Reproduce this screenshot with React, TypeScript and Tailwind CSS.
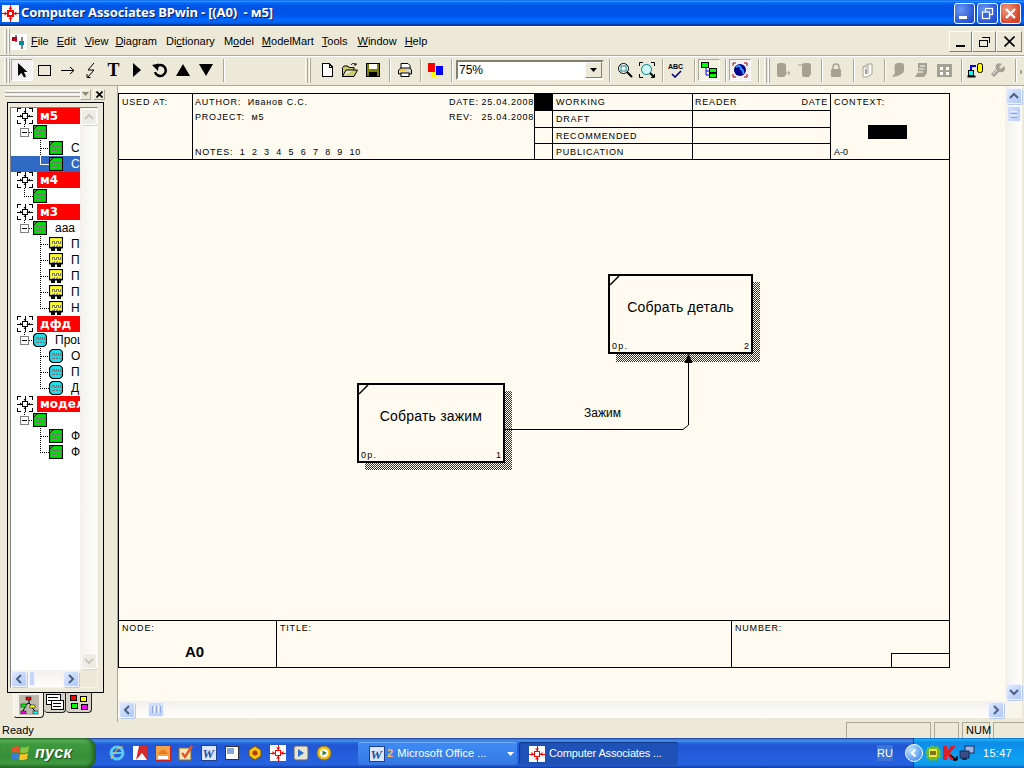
import React from "react";

const S = ({ children, w = 16, h = 16 }: { children: React.ReactNode; w?: number; h?: number }) => (
  <svg width={w} height={h} viewBox={`0 0 ${w} ${h}`} className="block shrink-0">{children}</svg>
);

const BPLogo = ({ size = 16 }: { size?: number }) => (
  <svg width={size} height={size} viewBox="0 0 16 16" className="block shrink-0">
    <rect width="16" height="16" fill="#fff" />
    <g stroke="#f00" strokeWidth="1" shapeRendering="crispEdges" fill="none">
      <rect x="5.5" y="5.5" width="5" height="5" strokeWidth="1.4" />
      <path d="M0 8H5M11 8H16M8 0V5M8 11V16" />
    </g>
    <path d="M8 5L6 2.5H10ZM8 11L6 13.5H10ZM5 8L2.5 6V10ZM11 8L13.5 6V10Z" fill="#f00" />
  </svg>
);

const Grip = ({ className = "" }: { className?: string }) => (
  <div className={`flex h-[25px] w-[6px] gap-[1px] shrink-0 ${className}`}>
    <div className="w-[3px] h-full border-l border-white bg-[#ECE9D8] border-r border-r-[#ACA899]" />
    <div className="w-[2px] h-full border-r border-r-[#ACA899] border-l border-white" />
  </div>
);

const Sep = ({ className = "" }: { className?: string }) => (
  <div className={`w-[2px] h-[23px] shrink-0 border-l border-l-[#ACA899] border-r border-r-white ${className}`} />
);

const Tool = ({ children, className = "w-[23px]" }: { children: React.ReactNode; className?: string }) => (
  <div className={`h-[22px] flex items-center justify-center shrink-0 ${className}`}>{children}</div>
);

const Pressed = ({ children, className = "" }: { children: React.ReactNode; className?: string }) => (
  <div className={`w-[22px] h-[22px] flex items-center justify-center shrink-0 border border-[#ACA899] border-r-white border-b-white bg-[image:repeating-conic-gradient(#ECE9D8_0%_25%,#ffffff_0%_50%)] bg-[length:2px_2px] ${className}`}>{children}</div>
);

const GRAY = "#A5A294";

const Chev = ({ dir, color = "#4D6185" }: { dir: "u" | "d" | "l" | "r"; color?: string }) => {
  const d = { u: "M3 9L7 5L11 9", d: "M3 5L7 9L11 5", l: "M9 3L5 7L9 11", r: "M5 3L9 7L5 11" }[dir];
  return (
    <svg width="14" height="14" viewBox="0 0 14 14" className="block">
      <path d={d} fill="none" stroke={color} strokeWidth="2" />
    </svg>
  );
};

const SBtn = ({ dir, className = "" }: { dir: "u" | "d" | "l" | "r"; className?: string }) => (
  <div className={`w-[16px] h-[16px] shrink-0 flex items-center justify-center rounded-[2px] border border-[#EEF3FE] bg-[linear-gradient(135deg,#E1EAFE,#AEC8F7)] shadow-[1px_1px_0_#B9C9EC] ${className}`}>
    <Chev dir={dir} />
  </div>
);

const SBtnOff = ({ dir, className = "" }: { dir: "u" | "d"; className?: string }) => (
  <div className={`w-[16px] h-[16px] shrink-0 flex items-center justify-center rounded-[2px] border border-white bg-[#EEEDE5] shadow-[1px_1px_0_#D8D6CA] ${className}`}>
    <Chev dir={dir} color="#C9C7BA" />
  </div>
);

const ModelIcon = () => (
  <S>
    <g fill="none" stroke="#000" shapeRendering="crispEdges">
      <path d="M0.5 4V0.5H4M12 0.5H15.5V4M15.5 12V15.5H12M4 15.5H0.5V12" />
      <path d="M8 0V5M8 11V16M0 8H5M11 8H16" />
      <rect x="5.5" y="5.5" width="5" height="5" strokeWidth="1" fill="#fff" />
    </g>
    <path d="M8 5L6.5 3H9.5ZM8 11L6.5 13H9.5ZM5 8L3 6.5V9.5ZM11 8L13 6.5V9.5Z" />
  </S>
);

const Box = ({ color, kind = "idef" }: { color: string; kind?: "idef" | "dfd" | "flow" }) => (
  <S w={14} h={14}>
    <rect x="0.5" y="0.5" width="13" height={kind === "flow" ? 10 : 13} rx={kind === "dfd" ? 4 : 0} fill={color} stroke="#000" strokeWidth="1.2" />
    {kind === "flow" && <path d="M2 11H6V14H2ZM8 11H12V14H8Z" />}
    {kind === "flow" && <rect x="0.5" y="10.5" width="13" height="1" />}
    {kind === "idef" && <path d="M1 4L4 1" stroke="#000" strokeWidth="1" />}
    <path d="M3.5 6.5V4H5.5V6.5H7V4H9V6.5H11V4M3 9H5V7.5M6.5 9H8.5V7.5M10 9H11.5" fill="none" stroke="#777" strokeWidth="1" shapeRendering="crispEdges" />
  </S>
);

const Lbl = ({ children, white }: { children: React.ReactNode; white?: boolean }) => (
  <span className={`ml-[8px] text-[12px] whitespace-nowrap leading-none ${white ? "text-white" : "text-black"}`}>{children}</span>
);

const ModelRow = ({ name }: { name: string }) => (
  <div className="h-[16px] flex items-center bg-white">
    <div className="ml-[6px]"><ModelIcon /></div>
    <div className="ml-[4px] h-[16px] w-[43px] shrink-0 bg-[#FF0000] pl-[3px] flex items-center text-[12px] font-bold text-white font-['DejaVu_Sans',sans-serif] whitespace-nowrap overflow-hidden">{name}</div>
  </div>
);

const L2 = ({ color, kind, text, minus = true }: { color: string; kind: "idef" | "dfd" | "flow"; text?: string; minus?: boolean }) => (
  <div className="h-[16px] flex items-center bg-white">
    <svg width="22" height="16" viewBox="0 0 22 16" className="block shrink-0">
      <g fill="none" stroke="#000" strokeDasharray="1 1" shapeRendering="crispEdges">
        <path d={minus ? "M13.5 0V4" : "M13.5 0V8.5H22"} />
        {minus && <path d="M18 8.5H22" />}
      </g>
      {minus && (
        <g shapeRendering="crispEdges">
          <rect x="9.5" y="4.5" width="8" height="8" fill="#fff" stroke="#808080" />
          <path d="M11 8.5H16" stroke="#000" />
        </g>
      )}
    </svg>
    <Box color={color} kind={kind} />
    {text && <Lbl>{text}</Lbl>}
  </div>
);

const L3 = ({ color, kind, text, last, sel }: { color: string; kind: "idef" | "dfd" | "flow"; text: string; last?: boolean; sel?: boolean }) => (
  <div className={`h-[16px] flex items-center ${sel ? "bg-[#316AC5]" : "bg-white"}`}>
    <svg width="38" height="16" viewBox="0 0 38 16" className="block shrink-0">
      <path d={last ? "M29.5 0V8.5H38" : "M29.5 0V16M29.5 8.5H38"} fill="none" stroke={sel ? "#fff" : "#000"} strokeDasharray={sel ? undefined : "1 1"} shapeRendering="crispEdges" />
    </svg>
    <Box color={color} kind={kind} />
    <Lbl white={sel}>{text}</Lbl>
  </div>
);

const Tree = () => (
  <div className="w-[69px] shrink-0 bg-white overflow-hidden flex flex-col">
    <ModelRow name="м5" />
    <L2 color="#00E000" kind="idef" />
    <L3 color="#00E000" kind="idef" text="Со" />
    <L3 color="#00E000" kind="idef" text="Со" last sel />
    <ModelRow name="м4" />
    <L2 color="#00E000" kind="idef" minus={false} />
    <ModelRow name="м3" />
    <L2 color="#00E000" kind="idef" text="ааа" />
    <L3 color="#FFFF33" kind="flow" text="П" />
    <L3 color="#FFFF33" kind="flow" text="П" />
    <L3 color="#FFFF33" kind="flow" text="П" />
    <L3 color="#FFFF33" kind="flow" text="П" />
    <L3 color="#FFFF33" kind="flow" text="Н" last />
    <ModelRow name="дфд" />
    <L2 color="#22DDEE" kind="dfd" text="Проц" />
    <L3 color="#22DDEE" kind="dfd" text="О" />
    <L3 color="#22DDEE" kind="dfd" text="П" />
    <L3 color="#22DDEE" kind="dfd" text="Д" last />
    <ModelRow name="модель" />
    <L2 color="#00E000" kind="idef" />
    <L3 color="#00E000" kind="idef" text="Ф" />
    <L3 color="#00E000" kind="idef" text="Ф" last />
  </div>
);

const LeftPanel = () => (
  <div className="w-[118px] shrink-0 h-full flex flex-col border-r border-r-[#ACA899] bg-[#ECE9D8]">
    <div className="h-[16px] flex shrink-0 items-center pl-[5px]">
      <div className="w-[75px] h-[7px] flex flex-col gap-[1px] mt-[-1px]">
        <div className="h-[3px] border-t border-white border-b border-b-[#ACA899]" />
        <div className="h-[3px] border-t border-white border-b border-b-[#ACA899]" />
      </div>
      <div className="w-[11px] h-[11px] border border-white border-r-[#ACA899] border-b-[#ACA899] flex items-center justify-center">
        <svg width="7" height="4" viewBox="0 0 7 4"><path d="M0 0H7L3.5 4Z" fill="#8A8878" /></svg>
      </div>
      <div className="ml-[2px] w-[12px] h-[11px] border border-white border-r-[#ACA899] border-b-[#ACA899] flex items-center justify-center">
        <svg width="7" height="7" viewBox="0 0 7 7"><path d="M0.5 0.5L6.5 6.5M6.5 0.5L0.5 6.5" stroke="#000" strokeWidth="1.6" /></svg>
      </div>
    </div>
    <div className="ml-[7px] w-[97px] h-[591px] shrink-0 border border-black pl-[2px] pr-[4px] pt-[4px] pb-[4px] flex">
      <div className="w-[88px] h-[581px] border border-[#808080] border-r-[#F5F3EA] border-b-[#F5F3EA] flex flex-col bg-white">
        <div className="flex h-[562px] overflow-hidden">
          <Tree />
          <div className="w-[17px] shrink-0 flex flex-col justify-between py-[1px] pl-[1px] bg-[linear-gradient(90deg,#F3F1EC,#FEFEFB)]">
            <SBtnOff dir="u" />
            <SBtnOff dir="d" />
          </div>
        </div>
        <div className="h-[17px] flex shrink-0">
          <div className="w-[69px] flex items-center bg-[linear-gradient(180deg,#F3F1EC,#FEFEFB)]">
            <SBtn dir="l" />
            <div className="ml-[2px] w-[6px] h-[15px] rounded-[2px] bg-[#C6D6F8] border border-[#EEF3FE]" />
            <SBtn dir="r" className="ml-auto mr-[1px]" />
          </div>
          <div className="flex-1 bg-[#ECE9D8]" />
        </div>
      </div>
    </div>
    <div className="flex pl-[13px] items-start">
      <div className="w-[31px] h-[25px] bg-[#F4F2E8] rounded-b-[4px] border-r border-b border-r-[#222] border-b-[#222] border-l border-l-white flex items-center justify-center">
        <div className="w-[20px] h-[20px] bg-[#BDBAAD] flex items-center justify-center">
          <svg width="18" height="18" viewBox="0 0 18 18">
            <path d="M9 4V7M9 7L5 9M9 7L12 10M12 12L15 15M5 11L3 15" stroke="#000" fill="none" />
            <rect x="6" y="1" width="5" height="3" fill="#f00" stroke="#000" strokeWidth=".5" />
            <rect x="1" y="8" width="5" height="3" fill="#0f0" stroke="#000" strokeWidth=".5" />
            <rect x="10" y="9" width="5" height="3" fill="#ff0" stroke="#000" strokeWidth=".5" />
            <rect x="1" y="15" width="5" height="3" fill="#f0f" stroke="#000" strokeWidth=".5" />
            <rect x="13" y="15" width="5" height="3" fill="#0ff" stroke="#000" strokeWidth=".5" />
          </svg>
        </div>
      </div>
      <div className="w-[22px] h-[20px] border-r border-b border-r-[#222] border-b-[#222] rounded-b-[4px] flex items-center justify-center bg-[#D5D2C5]">
        <svg width="18" height="17" viewBox="0 0 18 17" shapeRendering="crispEdges">
          <rect x="0.5" y="0.5" width="14" height="10" fill="#fff" stroke="#000" />
          <path d="M2 3H12M2 6H8" stroke="#000" />
          <rect x="5.5" y="6.5" width="12" height="9" fill="#fff" stroke="#000" />
          <path d="M7 9H15M7 12H15" stroke="#000" />
        </svg>
      </div>
      <div className="w-[26px] h-[20px] border-r border-b border-r-[#222] border-b-[#222] rounded-b-[4px] flex items-center justify-center bg-[#D5D2C5]">
        <svg width="20" height="17" viewBox="0 0 20 17" shapeRendering="crispEdges">
          <rect x="1.5" y="1.5" width="6" height="5" fill="#f00" stroke="#000" />
          <rect x="11.5" y="2.5" width="6" height="5" fill="#ff0" stroke="#000" />
          <rect x="2.5" y="9.5" width="6" height="5" fill="#0f0" stroke="#000" />
          <rect x="12.5" y="10.5" width="6" height="5" fill="#f0f" stroke="#000" />
        </svg>
      </div>
    </div>
  </div>
);

const Dither = ({ className }: { className: string }) => (
  <div className={`absolute bg-[image:repeating-conic-gradient(#333_0%_25%,#FFFBF0_0%_50%)] bg-[length:2px_2px] ${className}`} />
);

const Activity = ({ text, num, className }: { text: string; num: string; className: string }) => (
  <div className={`absolute border-2 border-black bg-[#FFFBF0] flex items-center justify-center pb-[13px] ${className}`}>
    <svg width="10" height="10" viewBox="0 0 10 10" className="absolute left-0 top-0"><path d="M0 9L9 0" stroke="#000" strokeWidth="1.5" /></svg>
    <span className="text-[14px] tracking-[0.2px] whitespace-nowrap">{text}</span>
    <span className="absolute left-[2px] bottom-[1px] text-[9px] tracking-[1.2px] leading-[10px]">0р.</span>
    <span className="absolute right-[2px] bottom-[1px] text-[9px] leading-[10px]">{num}</span>
  </div>
);

const Small = ({ children, className = "" }: { children: React.ReactNode; className?: string }) => (
  <span className={`block text-[9px] tracking-[0.8px] leading-[12px] whitespace-nowrap ${className}`}>{children}</span>
);

const StatusCell = ({ children, className = "" }: { children?: React.ReactNode; className?: string }) => (
  <div className={`flex items-center pl-[3px] ${className}`}>{children}</div>
);

const Frame = () => (
  <div className="ml-0 mt-[7px] w-[832px] h-[575px] border border-black flex flex-col text-black">
    <div className="h-[66px] shrink-0 border-b border-black grid grid-cols-[74px_342px_296px_118px]">
      <div className="border-r border-black pl-[3px] pt-[2px]"><Small>USED AT:</Small></div>
      <div className="border-r border-black pl-[2px] pt-[2px] flex flex-col">
        <div className="flex justify-between h-[15px]">
          <Small>AUTHOR:&nbsp; Иванов С.С.</Small>
          <div className="w-[85px] flex justify-between"><Small>DATE:</Small><Small className="tracking-[0.75px]">25.04.2008</Small></div>
        </div>
        <div className="flex justify-between h-[15px]">
          <Small>PROJECT:&nbsp; м5</Small>
          <div className="w-[85px] flex justify-between"><Small>REV:</Small><Small className="tracking-[0.75px]">25.04.2008</Small></div>
        </div>
        <Small className="mt-auto mb-[1px] [word-spacing:3.1px]">NOTES: 1 2 3 4 5 6 7 8 9 10</Small>
      </div>
      <div className="grid grid-cols-[18px_140px_138px] grid-rows-[17px_17px_16px_15px]">
        <div className="bg-black border-r border-b border-black" />
        <div className="border-r border-b border-black pl-[3px] flex items-center"><Small>WORKING</Small></div>
        <div className="border-r border-b border-black px-[2px] flex items-center justify-between"><Small>READER</Small><Small>DATE</Small></div>
        <div className="border-r border-b border-black" />
        <div className="border-r border-b border-black pl-[3px] flex items-center"><Small>DRAFT</Small></div>
        <div className="border-r border-b border-black" />
        <div className="border-r border-b border-black" />
        <div className="border-r border-b border-black pl-[3px] flex items-center"><Small>RECOMMENDED</Small></div>
        <div className="border-r border-b border-black" />
        <div className="border-r border-black" />
        <div className="border-r border-black pl-[3px] flex items-center"><Small>PUBLICATION</Small></div>
        <div className="border-r border-black" />
      </div>
      <div className="pl-[3px] pt-[2px] flex flex-col relative">
        <Small>CONTEXT:</Small>
        <div className="mt-[17px] ml-[34px] w-[39px] h-[14px] bg-black" />
        <Small className="mt-auto mb-[1px] tracking-normal">A-0</Small>
      </div>
    </div>
    <div className="flex-1 relative">
      <Dither className="left-[246px] top-[231px] w-[147px] h-[79px]" />
      <Activity text="Собрать зажим" num="1" className="left-[238px] top-[223px] w-[148px] h-[80px]" />
      <Dither className="left-[497px] top-[122px] w-[144px] h-[80px]" />
      <Activity text="Собрать деталь" num="2" className="left-[489px] top-[114px] w-[145px] h-[80px]" />
      <svg width="830" height="460" viewBox="0 0 830 460" className="absolute left-0 top-0 pointer-events-none">
        <path d="M386 269.5H564L569.5 265V200" fill="none" stroke="#000" strokeWidth="1" />
        <path d="M569.5 193.5L565.5 203H573.5Z" fill="#000" />
      </svg>
      <span className="absolute left-[465px] top-[246px] text-[12px] leading-[14px]">Зажим</span>
    </div>
    <div className="h-[47px] shrink-0 border-t border-black grid grid-cols-[158px_455px_217px]">
      <div className="border-r border-black pl-[3px] pt-[1px] flex flex-col">
        <Small>NODE:</Small>
        <div className="text-[15px] font-bold leading-[18px] mt-[9px] text-center pr-[9px] font-['Liberation_Sans',sans-serif]">A0</div>
      </div>
      <div className="border-r border-black pl-[3px] pt-[1px]"><Small>TITLE:</Small></div>
      <div className="pl-[3px] pt-[1px] flex flex-col">
        <Small>NUMBER:</Small>
        <div className="mt-auto self-end w-[58px] h-[14px] border-l border-t border-black" />
      </div>
    </div>
  </div>
);

const Main = () => (
  <div className="flex-1 h-full flex flex-col bg-[#ECE9D8]">
    <div className="flex h-[615px] shrink-0">
      <div className="w-[887px] shrink-0 bg-[#FFFBF0] flex flex-col overflow-hidden"><Frame /></div>
      <div className="w-[17px] shrink-0 bg-[linear-gradient(90deg,#F3F1EC,#FEFEFB)] flex flex-col pl-[1px]">
        <SBtn dir="u" className="mt-[2px]" />
        <div className="mt-[2px] ml-[1px] w-[14px] h-[16px] rounded-[2px] border border-[#EEF3FE] bg-[linear-gradient(90deg,#D3DFFB,#BDD0F8)] flex flex-col justify-center gap-[1px] px-[3px]">
          <div className="h-px bg-[#EEF3FE]" /><div className="h-px bg-[#8CA8DE]" /><div className="h-px bg-[#EEF3FE]" /><div className="h-px bg-[#8CA8DE]" />
        </div>
        <SBtn dir="d" className="mt-auto mb-[1px]" />
      </div>
    </div>
    <div className="flex h-[17px] shrink-0">
      <div className="w-[887px] shrink-0 bg-[linear-gradient(180deg,#F3F1EC,#FEFEFB)] flex items-center pl-[1px]">
        <SBtn dir="l" />
        <div className="ml-[13px] w-[16px] h-[15px] rounded-[2px] border border-[#EEF3FE] bg-[linear-gradient(180deg,#D3DFFB,#BDD0F8)] flex justify-center items-center gap-[1px]">
          <div className="w-px h-[7px] bg-[#8CA8DE]" /><div className="w-px h-[7px] bg-[#EEF3FE]" /><div className="w-px h-[7px] bg-[#8CA8DE]" /><div className="w-px h-[7px] bg-[#EEF3FE]" /><div className="w-px h-[7px] bg-[#8CA8DE]" />
        </div>
        <SBtn dir="r" className="ml-auto mr-[1px]" />
      </div>
      <div className="w-[17px] shrink-0 bg-[#F7F5EC]" />
    </div>
  </div>
);

const WinBtn = ({ children, red }: { children: React.ReactNode; red?: boolean }) => (
  <div className={`w-[21px] h-[21px] rounded-[3px] border border-white flex items-center justify-center ${red ? "bg-[radial-gradient(circle_at_30%_30%,#EE9A80,#D5472A_70%)]" : "bg-[radial-gradient(circle_at_30%_30%,#6C98F0,#2452D4_75%)]"}`}>{children}</div>
);

const TitleBar = () => (
  <div className="h-[26px] shrink-0 flex items-center bg-[linear-gradient(180deg,#0058EE_0%,#3593FF_4%,#288EFF_6%,#127DFF_8%,#036FFC_10%,#0262EE_14%,#0057E5_20%,#0054E3_24%,#0055EB_56%,#005BF5_66%,#026AFE_76%,#0062EF_86%,#0052D6_92%,#0040AB_94%,#003092_100%)]">
    <div className="ml-[2px]"><BPLogo size={17} /></div>
    <span className="ml-[2px] text-white text-[13px] tracking-[-0.15px] font-bold whitespace-pre font-['Noto_Sans',sans-serif] [text-shadow:1px_1px_0_#0A1F6A]">Computer Associates BPwin - [(A0)  - м5]</span>
    <div className="ml-auto flex gap-[2px] mr-[3px]">
      <WinBtn><div className="w-[8px] h-[3px] bg-white mt-[8px] mr-[3px]" /></WinBtn>
      <WinBtn>
        <svg width="13" height="13" viewBox="0 0 13 13" fill="none" stroke="#fff" strokeWidth="1.2"><rect x="4.5" y="1.5" width="7" height="6" /><rect x="1.5" y="5" width="7" height="6.5" fill="#3A67D8" /></svg>
      </WinBtn>
      <WinBtn red>
        <svg width="13" height="13" viewBox="0 0 13 13"><path d="M2 2L11 11M11 2L2 11" stroke="#fff" strokeWidth="2.2" /></svg>
      </WinBtn>
    </div>
  </div>
);

const MItem = ({ pre = "", u, post = "", ml }: { pre?: string; u: string; post?: string; ml: string }) => (
  <span className={`text-[11px] text-black whitespace-nowrap ${ml}`}>{pre}<u>{u}</u>{post}</span>
);

const MdiBtn = ({ children, className = "" }: { children: React.ReactNode; className?: string }) => (
  <div className={`h-[21px] flex items-center justify-center border border-white border-r-[#808070] border-b-[#808070] ${className}`}>{children}</div>
);

const MenuBar = () => (
  <div className="h-[30px] shrink-0 flex items-center pt-[1px] border-t border-t-white border-b border-b-[#ACA899] bg-[#ECE9D8]">
    <Grip className="ml-[4px]" />
    <div className="ml-[1px] w-[16px] h-[16px] bg-white">
      <svg width="16" height="16" viewBox="0 0 16 16">
        <path d="M5 1V8M11 3V15" stroke="#000" />
        <rect x="1" y="3" width="5" height="4" fill="#B00020" />
        <rect x="8" y="7" width="5" height="4" fill="#008B9A" />
      </svg>
    </div>
    <MItem u="F" post="ile" ml="ml-[4px]" />
    <MItem u="E" post="dit" ml="ml-[8px]" />
    <MItem u="V" post="iew" ml="ml-[9px]" />
    <MItem u="D" post="iagram" ml="ml-[7px]" />
    <MItem pre="Di" u="c" post="tionary" ml="ml-[9px]" />
    <MItem pre="M" u="o" post="del" ml="ml-[9px]" />
    <MItem u="M" post="odelMart" ml="ml-[8px]" />
    <MItem u="T" post="ools" ml="ml-[8px]" />
    <MItem u="W" post="indow" ml="ml-[10px]" />
    <MItem u="H" post="elp" ml="ml-[8px]" />
    <div className="ml-auto mr-[2px] flex">
      <MdiBtn className="w-[23px]"><div className="w-[9px] h-[2px] bg-black mt-[9px]" /></MdiBtn>
      <MdiBtn className="w-[24px]">
        <svg width="13" height="11" viewBox="0 0 13 11" fill="none" stroke="#000" shapeRendering="crispEdges"><path d="M3.5 1.5H11.5V6.5" strokeWidth="1" /><rect x="3.5" y="1" width="8" height="1" fill="#000" stroke="none" /><rect x="1.5" y="4.5" width="8" height="5.5" fill="#ECE9D8" /><rect x="1.5" y="4" width="8" height="1" fill="#000" stroke="none" /></svg>
      </MdiBtn>
      <MdiBtn className="w-[26px]">
        <svg width="11" height="11" viewBox="0 0 11 11"><path d="M0.5 0.5L10.5 10.5M10.5 0.5L0.5 10.5" stroke="#000" strokeWidth="1.6" /></svg>
      </MdiBtn>
    </div>
  </div>
);

const ToolBar = () => (
  <div className="h-[30px] shrink-0 flex items-center pb-[2px] border-t border-t-white border-b border-b-[#ACA899] bg-[#ECE9D8]">
    <Grip className="ml-[4px]" />
    <Pressed className="ml-[1px]">
      <S><path d="M4 1V14L7.5 11L10 15.5L12 14.5L10 10H13.5Z" /></S>
    </Pressed>
    <Tool><S><rect x="1.5" y="3.5" width="12" height="10" fill="none" stroke="#000" shapeRendering="crispEdges" /></S></Tool>
    <Tool><S><path d="M1 8.5H14M10 5L14 8.5L10 12" fill="none" stroke="#000" /></S></Tool>
    <Tool><S><path d="M11 1L5 8H11L5 15M4 12V15.5H7.5" fill="none" stroke="#000" /></S></Tool>
    <Tool><span className="font-['Liberation_Serif',serif] font-bold text-[18px] leading-none">T</span></Tool>
    <Tool><S><path d="M4 1L12 8L4 15Z" /></S></Tool>
    <Tool><S><path d="M4 5A5.5 5.5 0 1 1 3 10" fill="none" stroke="#000" strokeWidth="2.5" /><path d="M0 3L7 1.5L6 9Z" /></S></Tool>
    <Tool><S><path d="M8 2L15 14H1Z" /></S></Tool>
    <Tool><S><path d="M1 2H15L8 14Z" /></S></Tool>
    <Sep className="ml-[6px]" />

    <Grip className="ml-[80px]" />
    <Tool className="w-[23px] ml-[4px]"><S><path d="M3.5 1.5H10L13.5 5V14.5H3.5Z M10 1.5V5H13.5" fill="#fff" stroke="#000" shapeRendering="crispEdges" /></S></Tool>
    <Tool><S><path d="M0.5 14.5V5.5L2 4H6L7 5.5H12V8H4L0.5 14.5H12L15.5 8H12" fill="#CCCC66" stroke="#000" /><path d="M9 3C10 1 13 1 14 3M14 3V1M14 3H12" fill="none" stroke="#000" /></S></Tool>
    <Tool><S><rect x="1.5" y="1.5" width="13" height="13" fill="#808000" stroke="#000" shapeRendering="crispEdges" /><rect x="4" y="2" width="8" height="5" fill="#fff" /><rect x="4" y="10" width="8" height="4" fill="#000" /></S></Tool>
    <Sep className="ml-[5px]" />
    <Tool className="w-[23px] ml-[2px]"><S><path d="M4 6V1.5H11L13 3.5V6" fill="#fff" stroke="#000" /><path d="M1.5 8L4 6H13L14.5 8V12H1.5Z" fill="#D8D8C8" stroke="#000" /><rect x="4" y="11" width="8" height="3.5" fill="#fff" stroke="#000" /><path d="M3 8H9" stroke="#FFCC00" strokeWidth="1.5" /></S></Tool>
    <Sep className="ml-[4px]" />
    <Tool className="w-[23px] ml-[1px]">
      <S>
        <rect x="4" y="8" width="7" height="7" fill="#FFFF00" />
        <rect x="9" y="4" width="7" height="9" fill="#0000FF" />
        <rect x="1" y="1" width="7" height="9" fill="#FF0000" />
      </S>
    </Tool>
    <Sep className="ml-[5px]" />
    <div className="ml-[3px] w-[148px] h-[20px] shrink-0 border-2 border-[#808070] border-r-[#ECE9D8] border-b-white bg-white flex items-center text-[12px]">
      <span className="ml-[1px]">75%</span>
      <div className="ml-auto w-[17px] h-[16px] bg-[#ECE9D8] border border-white border-r-[#808070] border-b-[#808070] flex items-center justify-center">
        <svg width="7" height="4" viewBox="0 0 7 4"><path d="M0 0H7L3.5 4Z" /></svg>
      </div>
    </div>
    <Sep className="ml-[5px]" />
    <Tool className="w-[22px] ml-[3px]"><S><circle cx="6.5" cy="6.5" r="5" fill="#fff" stroke="#000" /><rect x="4" y="4" width="5" height="5" fill="none" stroke="#008080" /><path d="M10 10L15 15" stroke="#000" strokeWidth="2" /></S></Tool>
    <Tool className="w-[21px]"><S><path d="M0.5 4V0.5H4M12 0.5H15.5V4M0.5 12V15.5H4M12 15.5H15.5V12" fill="none" stroke="#000" /><circle cx="7.5" cy="7.5" r="5" fill="#CFF7F7" stroke="#008080" /><path d="M11 11L15 15" stroke="#000" strokeWidth="2" /></S></Tool>
    <Sep className="ml-[5px]" />
    <Tool className="w-[22px] ml-[1px]">
      <svg width="18" height="16" viewBox="0 0 18 16"><text x="1" y="7" fontSize="7" fontWeight="700" fontFamily="Liberation Sans, sans-serif" fill="#000">ABC</text><path d="M5 12L8 15L14 9" fill="none" stroke="#000080" strokeWidth="1.6" /></svg>
    </Tool>
    <Sep className="ml-[7px]" />
    <Pressed className="ml-[2px]">
      <S>
        <path d="M5 6V13H9M5 9H9" fill="none" stroke="#0000FF" />
        <rect x="0.5" y="0.5" width="7" height="5" fill="#0f0" stroke="#000" />
        <rect x="8.5" y="6.5" width="7" height="4" fill="#0f0" stroke="#000" />
        <rect x="8.5" y="11.5" width="7" height="4" fill="#0f0" stroke="#000" />
      </S>
    </Pressed>
    <Sep className="ml-[5px]" />
    <Pressed className="ml-[2px]">
      <S>
        <path d="M1 4V1H4M12 1H15V4M1 12V15H4M12 15H15V12" fill="none" stroke="#A00000" />
        <circle cx="8" cy="8" r="6" fill="#00008B" />
        <path d="M4 5C7 3 9 4 9 7C11 8 12 10 11 12" fill="none" stroke="#3399FF" strokeWidth="2" />
      </S>
    </Pressed>
    <Sep className="ml-[7px]" />
    <Grip className="ml-[4px]" />
    <Tool className="w-[22px] ml-[2px]"><S><path d="M2 3Q2 1 5 1H8Q11 1 11 4V13L9 15H4Q2 15 2 12Z" fill={GRAY} /><path d="M11 11H15M13 9L15 11L13 13" stroke={GRAY} fill="none" /></S></Tool>
    <Tool className="w-[22px]"><S><path d="M5 3Q5 1 8 1H11Q14 1 14 4V12L12 15H7Q5 15 5 12Z" fill={GRAY} /><path d="M1 3H5" stroke={GRAY} /></S></Tool>
    <Sep className="ml-[5px]" />
    <Tool className="w-[22px] ml-[2px]"><S><path d="M5 7V5A3 3 0 0 1 11 5V7" fill="none" stroke={GRAY} strokeWidth="1.5" /><rect x="3" y="7" width="10" height="8" rx="1" fill={GRAY} /></S></Tool>
    <Sep className="ml-[6px]" />
    <Tool className="w-[22px] ml-[2px]"><S><path d="M3 5L8 2H12V12L7 15H3Z" fill="#fff" stroke={GRAY} /><path d="M8 2V12M3 5H8" stroke={GRAY} /><rect x="5" y="7" width="2" height="5" fill={GRAY} /></S></Tool>
    <Sep className="ml-[5px]" />
    <Tool className="w-[22px] ml-[1px]"><S><path d="M5 2Q6 1 9 1H11Q14 1 14 4V8Q14 11 11 12L8 14L2 15L5 11Q4 7 5 2Z" fill={GRAY} /></S></Tool>
    <Tool className="w-[22px] ml-[1px]"><S><path d="M5 1H14V11L11 15H2L5 10Z" fill={GRAY} /><path d="M7 4H12M6 7H11M5 10H10" stroke="#fff" /></S></Tool>
    <Tool className="w-[22px] ml-[1px]"><S><rect x="1" y="2" width="15" height="13" fill={GRAY} /><path d="M4 5H7V8H4ZM10 5H13V8H10ZM4 10H7V13H4ZM10 10H13V13H10Z" fill="#fff" /></S></Tool>
    <Sep className="ml-[6px]" />
    <Tool className="w-[22px] ml-[1px]"><S><rect x="1.5" y="8.5" width="5" height="5" fill="#0ff" stroke="#000" /><rect x="0.5" y="13.5" width="8" height="2" fill="#000" /><path d="M4 8V4H9" fill="none" stroke="#0000FF" strokeWidth="2" /><rect x="10.5" y="1.5" width="5" height="9" rx="2" fill="#ff0" stroke="#000" /></S></Tool>
    <Tool className="w-[22px] ml-[1px]"><S><path d="M14 4L11 7L9 5L12 2Q8 0 6 3Q5 5 6 7L1 12L4 15L9 10Q12 11 14 9Q16 7 14 4Z" fill={GRAY} /><path d="M3 12L7 8" stroke="#fff" /></S></Tool>
    <Sep className="ml-[6px]" />
    <div className="ml-[3px] mt-[4px] w-[2px] h-[4px] bg-[#A5A294]" />
  </div>
);

const StatusBar = () => (
  <div className="h-[16px] shrink-0 flex items-stretch bg-[#ECE9D8] text-[11px] text-black">
    <span className="pl-[2px] leading-[16px]">Ready</span>
    <div className="ml-auto flex gap-[3px]">
      <StatusCell className="w-[85px] border-t border-l border-r border-[#ACA899]" />
      <StatusCell className="w-[25px] border-t border-l border-r border-[#ACA899]" />
      <StatusCell className="w-[28px] border-t border-l border-r border-[#ACA899]">NUM</StatusCell>
      <StatusCell className="w-[31px] border-t border-l border-[#ACA899]" />
    </div>
  </div>
);

const QL = ({ children }: { children: React.ReactNode }) => (
  <div className="w-[23px] h-full flex items-center justify-center shrink-0">{children}</div>
);

const WordIcon = () => (
  <S>
    <rect x="0.5" y="0.5" width="15" height="15" fill="#DCE6FA" stroke="#223F8C" />
    <text x="1.5" y="13" fontSize="13" fontStyle="italic" fontWeight="700" fontFamily="Liberation Serif, serif" fill="#2A4C9E">W</text>
  </S>
);

const Taskbar = () => (
  <div className="h-[30px] shrink-0 flex bg-[linear-gradient(180deg,#1F2F86_0%,#3165C4_3%,#3682E5_6%,#4490E6_10%,#3883E5_12%,#2B71E0_15%,#2663DA_18%,#235BD6_20%,#2258D5_23%,#2157D6_38%,#245DDB_54%,#2562DF_86%,#245FDC_89%,#2158D4_92%,#1D4EC0_95%,#1941A5_98%)]">
    <div className="w-[96px] h-full shrink-0 rounded-r-[10px] flex items-center pl-[11px] bg-[linear-gradient(180deg,#2F7A2F_0%,#5DB35D_8%,#3F9A3F_20%,#388E38_60%,#3F9A3F_85%,#2A6E2A_100%)] shadow-[inset_-3px_0_4px_#1F5C1F]">
      <svg width="19" height="19" viewBox="0 0 19 19" className="shrink-0">
        <path d="M1 4Q5 1 9 3L8 9Q5 7 0 9Z" fill="#E8542A" />
        <path d="M10 3Q14 5 18 2L17 8Q13 10 9 8.5Z" fill="#8FC63F" />
        <path d="M0 10Q4 8 8 10L7 16Q3 14 0 16Z" fill="#3B7DD8" />
        <path d="M9 10Q13 11 17 9L16 15Q12 17 8 15.5Z" fill="#F7C325" />
      </svg>
      <span className="ml-[5px] text-white font-bold italic text-[16px] leading-none tracking-[0.3px] font-['Liberation_Sans',sans-serif] [text-shadow:1px_1px_1px_#1A4A1A]">пуск</span>
    </div>
    <div className="ml-[9px] flex h-full shrink-0">
      <QL><S><circle cx="8" cy="8" r="6" fill="none" stroke="#5CC8F5" strokeWidth="3" /><path d="M2 8H14" stroke="#5CC8F5" strokeWidth="2" /><path d="M14 2Q9 0 2 14" fill="none" stroke="#F2C14E" strokeWidth="1" /></S></QL>
      <QL><S><rect x="1" y="1" width="14" height="14" fill="#fff" /><path d="M7 1H15V15L10 8L4 15Z" fill="#D42B2B" /></S></QL>
      <QL><S><rect x="0.5" y="0.5" width="15" height="15" fill="#F4A24A" stroke="#C81E1E" /><path d="M3 11H13V14H3Z" fill="#fff" /><path d="M3 9Q8 1 13 9Z" fill="#E87A1D" /></S></QL>
      <QL><S><rect x="1" y="3" width="12" height="12" fill="#F6E7B8" stroke="#8A6A20" /><path d="M4 8L7 12L14 1" fill="none" stroke="#E8542A" strokeWidth="2.4" /></S></QL>
      <QL><WordIcon /></QL>
      <QL><S><rect x="1.5" y="1.5" width="13" height="13" fill="#fff" stroke="#333" /><rect x="3" y="3" width="7" height="6" fill="#8AA5D8" /></S></QL>
      <QL><S><path d="M8 1L14 5V11L8 15L2 11V5Z" fill="#F5C211" stroke="#7A4A00" /><circle cx="8" cy="8" r="2.5" fill="#B53A00" /></S></QL>
      <QL><BPLogo /></QL>
      <QL><S><rect x="1" y="1" width="14" height="14" rx="2" fill="#E8E4D0" stroke="#666" /><path d="M5 4L11 8L5 12Z" fill="#2C6ED5" /></S></QL>
      <QL><S><circle cx="8" cy="8" r="7" fill="#F5C211" stroke="#8A6A20" /><circle cx="8" cy="8" r="4" fill="#fff" /><path d="M6.5 5.5L11 8L6.5 10.5Z" fill="#2E7D32" /></S></QL>
    </div>
    <div className="ml-[23px] mt-[4px] w-[159px] h-[23px] shrink-0 rounded-[3px] flex items-center pl-[11px] text-white text-[11px] tracking-[0.05px] bg-[linear-gradient(180deg,#3F8CF3,#3A81EC_50%,#3476E2)] shadow-[inset_0_1px_0_#6FA8F8]">
      <WordIcon />
      <span className="ml-[2px] text-[#F9B95C] font-bold">2</span>
      <span className="ml-[4px] whitespace-nowrap">Microsoft Office ...</span>
      <svg width="7" height="4" viewBox="0 0 7 4" className="ml-auto mr-[3px]"><path d="M0 0H7L3.5 4Z" fill="#fff" /></svg>
    </div>
    <div className="ml-[2px] mt-[4px] w-[159px] h-[23px] shrink-0 rounded-[3px] flex items-center pl-[10px] text-white text-[11px] tracking-[-0.15px] bg-[#1E52B7] shadow-[inset_1px_1px_1px_#123A8C]">
      <BPLogo />
      <span className="ml-[4px] whitespace-nowrap">Computer Associates ...</span>
    </div>
    <div className="ml-auto mr-[20px] mt-[7px] w-[16px] h-[16px] bg-[#3C74D8] text-white text-[11px] leading-[16px] text-center">RU</div>
    <div className="w-[111px] h-full shrink-0 flex items-center border-l border-l-[#0B3C9C] bg-[linear-gradient(180deg,#0C59B9_0%,#139EE9_3%,#18B5F2_6%,#139BEB_10%,#1290E8_14%,#0D8DEA_19%,#0D9FF1_63%,#0F9EED_81%,#119BE9_88%,#1392E2_91%,#137ED7_94%,#095BC9_100%)]">
      <div className="-ml-[9px] w-[18px] h-[18px] rounded-full border border-white bg-[radial-gradient(circle_at_30%_30%,#BFE3FF,#2E7BE8)] flex items-center justify-center shrink-0">
        <svg width="10" height="10" viewBox="0 0 10 10"><path d="M6.5 1.5L3 5L6.5 8.5" fill="none" stroke="#fff" strokeWidth="2" /></svg>
      </div>
      <div className="ml-[2px]"><S><path d="M8 0L10 2L13 1L14 4L16 6L15 9L16 12L13 13L12 16L9 15L6 16L4 14L1 13L2 10L0 7L2 5L2 2L5 2Z" fill="#6DBB2A" /><rect x="4" y="4" width="8" height="8" fill="#F5E642" /><path d="M6 6V10M8 6V10M10 6V10" stroke="#000" /></S></div>
      <div className="ml-[1px]"><S><path d="M1 1H5V6L9 1H14L8 8L14 15H9L5 10V15H1Z" fill="#E01C24" /><path d="M8 10L15 15M15 15V11M15 15H11" stroke="#000" strokeWidth="1.5" fill="none" /></S></div>
      <div className="ml-[1px]"><S><rect x="6" y="1" width="9" height="7" fill="#9DB4E5" stroke="#1A2A55" /><rect x="1" y="6" width="9" height="7" fill="#3A4D85" stroke="#1A2A55" /><rect x="3" y="13" width="5" height="2" fill="#1A2A55" /></S></div>
      <span className="ml-[8px] text-white text-[11px] tracking-[0.3px] whitespace-nowrap">15:47</span>
    </div>
  </div>
);

export default function App() {
  return (
    <div className="w-[1024px] h-[768px] overflow-hidden flex flex-col bg-[#ECE9D8] font-['Liberation_Sans',Arial,sans-serif] text-black">
      <TitleBar />
      <MenuBar />
      <ToolBar />
      <div className="flex h-[636px] shrink-0">
        <LeftPanel />
        <Main />
      </div>
      <StatusBar />
      <Taskbar />
    </div>
  );
}
